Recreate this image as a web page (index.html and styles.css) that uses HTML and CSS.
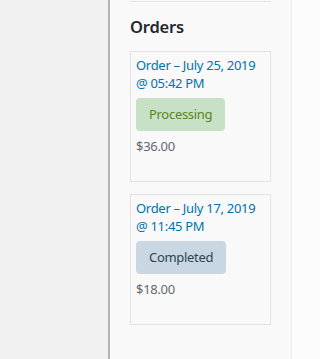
FILE: index.html
```html
<!DOCTYPE html>
<html>
<head>
<meta charset="utf-8">
<link rel="stylesheet" href="styles.css">
</head>
<body>
<div class="page">
  <div class="side"></div>
  <div class="panel">
    <div class="prev-card"></div>
    <h2 class="title">Orders</h2>
    <div class="card">
      <a class="order-link" href="#">Order – July 25, 2019 @ 05:42 PM</a>
      <span class="badge badge-processing">Processing</span>
      <div class="price">$36.00</div>
    </div>
    <div class="card">
      <a class="order-link" href="#">Order – July 17, 2019 @ 11:45 PM</a>
      <span class="badge badge-completed">Completed</span>
      <div class="price">$18.00</div>
    </div>
  </div>
  <div class="edge"></div>
</div>
</body>
</html>
```

FILE: styles.css
```css
html, body {
  margin: 0;
  padding: 0;
}
body {
  font-family: "Noto Sans", "Open Sans", sans-serif;
  font-size: 13px;
  letter-spacing: -0.3px;
  background: #f0f0f0;
}
.page {
  display: flex;
  height: 359px;
  overflow: hidden;
}
.side {
  width: 108px;
  flex: none;
  background: #f0f0f0;
}
.panel {
  width: 184px;
  flex: none;
  background: #f9f9f9;
  border-left: 2px solid #b4b4b4;
  border-right: 1px solid #ececec;
  padding-left: 20px;
  box-sizing: border-box;
}
.edge {
  flex: 1;
  background: #fcfcfc;
}
.prev-card {
  width: 141px;
  height: 1px;
  border-bottom: 1px solid #e4e4e4;
  box-sizing: content-box;
}
.title {
  margin: 0;
  padding-top: 13px;
  font-size: 16.5px;
  letter-spacing: -0.2px;
  line-height: 24px;
  font-weight: 600;
  color: #23282d;
  height: 24px;
  margin-bottom: 12px;
}
.card {
  width: 141px;
  height: 131px;
  box-sizing: border-box;
  border: 1px solid #e2e2e2;
  background: #f9f9f9;
  padding: 4px 5px 0 5px;
  margin-bottom: 12px;
  display: flex;
  flex-direction: column;
  align-items: flex-start;
}
.order-link {
  display: block;
  color: #0073aa;
  text-decoration: none;
  line-height: 18px;
}
.badge {
  display: block;
  margin-top: 6px;
  height: 33px;
  line-height: 33px;
  padding: 0 13px;
  border-radius: 4px;
}
.badge-processing {
  background: #c6e1c6;
  color: #5b841b;
}
.badge-completed {
  background: #c8d7e1;
  color: #2e4453;
}
.price {
  margin-top: 6px;
  color: #646970;
  line-height: 18px;
}
```
